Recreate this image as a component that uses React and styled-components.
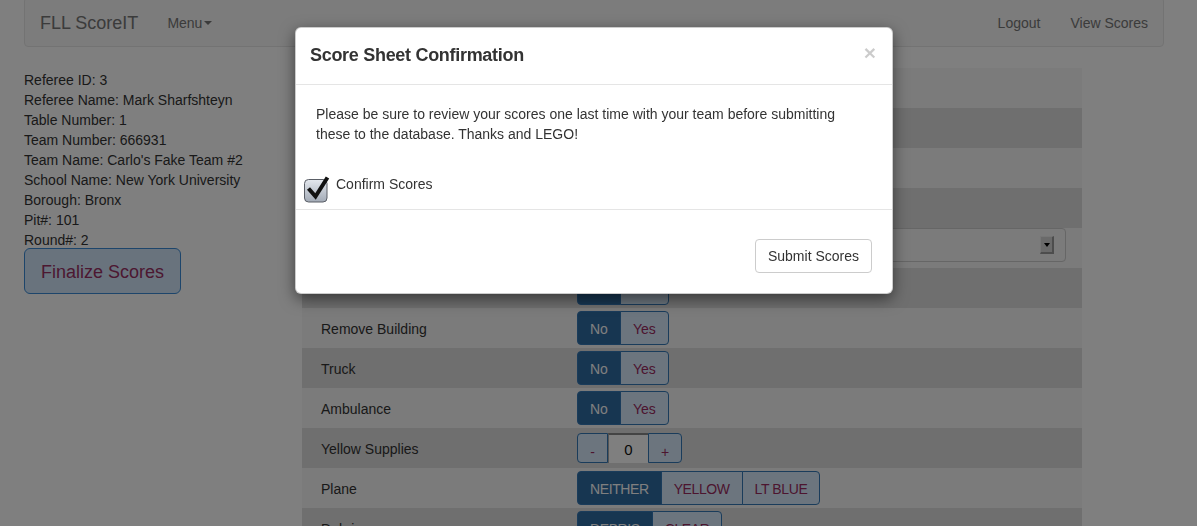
import React from 'react'
import styled, { createGlobalStyle } from 'styled-components'

const GlobalStyle = createGlobalStyle`
  * { box-sizing: border-box; }
  html, body {
    margin: 0;
    background: #fff;
  }
  body {
    font-family: "Liberation Sans", Arial, sans-serif;
    font-size: 14px;
    line-height: 20px;
    color: #333;
    overflow: hidden;
  }
`

const Navbar = styled.nav`
  display: flex;
  align-items: center;
  width: 1140px;
  height: 50px;
  margin: -3px 0 21px 24px;
  padding-left: 15px;
  background: #f8f8f8;
  border: 1px solid #e7e7e7;
  border-radius: 4px;
`

const Brand = styled.a`
  font-size: 18px;
  color: #777;
  margin-right: 14px;
  padding-top: 1px;
`

const NavLinks = styled.div`
  display: flex;
  margin-left: ${p => (p.$right ? 'auto' : '0')};
`

const NavLink = styled.a`
  display: flex;
  align-items: center;
  padding: 1px 15px 0;
  color: #777;
`

const Caret = styled.span`
  display: inline-block;
  margin-left: 2px;
  border-top: 4px solid #777;
  border-left: 4px solid transparent;
  border-right: 4px solid transparent;
`

const Main = styled.div`
  display: flex;
  padding-left: 24px;
`

const Info = styled.div`
  width: 278px;
  padding-top: 2px;
`

const InfoLine = styled.div`
  white-space: nowrap;
`

const FinalizeButton = styled.button`
  margin-top: -2px;
  padding: 11px 16px 9px;
  font-family: inherit;
  font-size: 18px;
  line-height: 24px;
  color: #993063;
  background: #d2e6fb;
  border: 1px solid #3a8bd6;
  border-radius: 6px;
`

const Sheet = styled.div`
  width: 780px;
`

const Row = styled.div`
  display: flex;
  align-items: ${p => (p.$top ? 'flex-start' : 'center')};
  height: 40px;
  background: ${p => (p.$dark ? '#dedede' : '#f6f6f6')};
`

const Label = styled.div`
  width: 275px;
  padding: 2px 0 0 19px;
  white-space: nowrap;
`

const Control = styled.div`
  flex: 1;
  display: flex;
  padding-right: 16px;
`

const BtnGroup = styled.div`
  display: flex;
`

const GroupBtn = styled.button`
  padding: 7px 12px 5px;
  font-family: inherit;
  font-size: 14px;
  line-height: 20px;
  letter-spacing: ${p => (p.$caps ? '-0.4px' : '0')};
  color: ${p => (p.$active ? '#fff' : '#9a2a5e')};
  background: ${p => (p.$active ? '#2f6ca3' : '#d9ebfd')};
  border: 1px solid #3478b6;
  border-radius: 0;
  &:not(:first-child) { margin-left: -1px; }
  &:first-child { border-radius: 4px 0 0 4px; }
  &:last-child { border-radius: 0 4px 4px 0; }
`

const StepBtn = styled.button`
  width: ${p => p.$w}px;
  height: 30px;
  padding: 7px 0 0;
  font-family: inherit;
  font-size: 14px;
  line-height: 20px;
  color: #9a2a5e;
  background: #d9ebfd;
  border: 1px solid #3478b6;
  border-radius: ${p => (p.$left ? '4px 0 0 4px' : '0 4px 4px 0')};
`

const StepInput = styled.div`
  width: 40px;
  height: 30px;
  display: flex;
  align-items: center;
  justify-content: center;
  padding-top: 1px;
  font-size: 15px;
  color: #111;
  background: #fff;
  border-top: 2px solid #888;
  border-left: 1px solid #aaa;
`

const Select = styled.div`
  position: relative;
  flex: 1;
  height: 34px;
  border: 1px solid #ccc;
  border-radius: 4px;
  background: #f6f6f6;
`

const SelectArrow = styled.span`
  position: absolute;
  right: 11px;
  top: 7px;
  width: 14px;
  height: 18px;
  background: #d4d4d4;
  border-right: 2px solid #9a9a9a;
  border-bottom: 2px solid #9a9a9a;
  border-top: 1px solid #ececec;
  border-left: 1px solid #ececec;
  &::after {
    content: '';
    position: absolute;
    left: 3px;
    top: 6px;
    border-top: 4px solid #000;
    border-left: 3px solid transparent;
    border-right: 3px solid transparent;
  }
`

const Backdrop = styled.div`
  position: fixed;
  inset: 0;
  background: rgba(0, 0, 0, 0.5);
`

const ModalLayer = styled.div`
  position: fixed;
  inset: 0;
`

const Dialog = styled.div`
  width: 598px;
  margin: 27px 0 0 295px;
  background: #fff;
  border: 1px solid rgba(0, 0, 0, 0.2);
  border-radius: 6px;
  box-shadow: 0 5px 15px rgba(0, 0, 0, 0.5);
`

const ModalHeader = styled.div`
  display: flex;
  justify-content: space-between;
  align-items: flex-start;
  padding: 15px 14px;
  border-bottom: 1px solid #e5e5e5;
`

const ModalTitle = styled.h4`
  margin: 0;
  font-size: 18px;
  line-height: 25.7px;
  font-weight: 700;
  letter-spacing: -0.3px;
  color: #333;
`

const Close = styled.span`
  margin: -1px 2px 0 0;
  font-size: 21px;
  line-height: 1;
  font-weight: 700;
  color: #000;
  opacity: 0.2;
`

const ModalBody = styled.div`
  padding: 19px 20px 15px;
`

const Text = styled.p`
  margin: 0 0 30px;
`

const CheckRow = styled.label`
  position: relative;
  display: block;
  padding-left: 20px;
`

const CheckIcon = styled.svg`
  position: absolute;
  left: -12px;
  top: 1px;
`

const ModalFooter = styled.div`
  display: flex;
  justify-content: flex-end;
  padding: 29px 20px 20px;
  border-top: 1px solid #e5e5e5;
`

const DefaultButton = styled.button`
  padding: 6px 12px;
  font-family: inherit;
  font-size: 14px;
  line-height: 20px;
  color: #333;
  background: #fff;
  border: 1px solid #ccc;
  border-radius: 4px;
`

const info = [
  'Referee ID: 3',
  'Referee Name: Mark Sharfshteyn',
  'Table Number: 1',
  'Team Number: 666931',
  "Team Name: Carlo's Fake Team #2",
  'School Name: New York University',
  'Borough: Bronx',
  'Pit#: 101',
  'Round#: 2',
]

function Toggle({ options, active = 0, caps }) {
  return (
    <BtnGroup>
      {options.map((o, i) => (
        <GroupBtn key={o} $caps={caps} $active={i === active}>{o}</GroupBtn>
      ))}
    </BtnGroup>
  )
}

const yesNo = ['No', 'Yes']

function ConfirmCheck() {
  return (
    <CheckIcon width="28" height="28" viewBox="0 0 28 28">
      <defs>
        <linearGradient id="cb" x1="0" y1="0" x2="0" y2="1">
          <stop offset="0" stopColor="#e4e8ee" />
          <stop offset="1" stopColor="#a2aab6" />
        </linearGradient>
      </defs>
      <rect x="0.5" y="4.5" width="22.5" height="22.5" rx="4" fill="url(#cb)" stroke="#5a5e66" />
      <path d="M4.5 13.5 L11.5 21.5 L23.5 2.5" fill="none" stroke="#111" strokeWidth="4" strokeLinejoin="miter" />
    </CheckIcon>
  )
}

export default function App() {
  return (
    <>
      <GlobalStyle />
      <Navbar>
        <Brand>FLL ScoreIT</Brand>
        <NavLinks>
          <NavLink>Menu<Caret /></NavLink>
        </NavLinks>
        <NavLinks $right>
          <NavLink>Logout</NavLink>
          <NavLink>View Scores</NavLink>
        </NavLinks>
      </Navbar>

      <Main>
        <Info>
          {info.map(l => <InfoLine key={l}>{l}</InfoLine>)}
          <FinalizeButton>Finalize Scores</FinalizeButton>
        </Info>

        <Sheet>
          <Row><Label>Evacuation Sign</Label><Control><Toggle options={yesNo} /></Control></Row>
          <Row $dark><Label>Cargo Plane</Label><Control><Toggle options={yesNo} /></Control></Row>
          <Row><Label>Transportation</Label><Control><Toggle options={yesNo} /></Control></Row>
          <Row $dark><Label>Tsunami</Label><Control><Toggle options={yesNo} /></Control></Row>
          <Row $top><Label>Structure</Label><Control><Select><SelectArrow /></Select></Control></Row>
          <Row $dark><Label>Base Isolation</Label><Control><Toggle options={yesNo} /></Control></Row>
          <Row><Label>Remove Building</Label><Control><Toggle options={yesNo} /></Control></Row>
          <Row $dark><Label>Truck</Label><Control><Toggle options={yesNo} /></Control></Row>
          <Row><Label>Ambulance</Label><Control><Toggle options={yesNo} /></Control></Row>
          <Row $dark>
            <Label>Yellow Supplies</Label>
            <Control>
              <StepBtn $left $w={31}>-</StepBtn>
              <StepInput>0</StepInput>
              <StepBtn $w={34}>+</StepBtn>
            </Control>
          </Row>
          <Row><Label>Plane</Label><Control><Toggle caps options={['NEITHER', 'YELLOW', 'LT BLUE']} /></Control></Row>
          <Row $dark><Label>Debris</Label><Control><Toggle caps options={['DEBRIS', 'CLEAR']} /></Control></Row>
        </Sheet>
      </Main>

      <Backdrop />
      <ModalLayer>
        <Dialog>
          <ModalHeader>
            <ModalTitle>Score Sheet Confirmation</ModalTitle>
            <Close>×</Close>
          </ModalHeader>
          <ModalBody>
            <Text>
              Please be sure to review your scores one last time with your team before submitting
              these to the database. Thanks and LEGO!
            </Text>
            <CheckRow>
              <ConfirmCheck />
              Confirm Scores
            </CheckRow>
          </ModalBody>
          <ModalFooter>
            <DefaultButton>Submit Scores</DefaultButton>
          </ModalFooter>
        </Dialog>
      </ModalLayer>
    </>
  )
}
